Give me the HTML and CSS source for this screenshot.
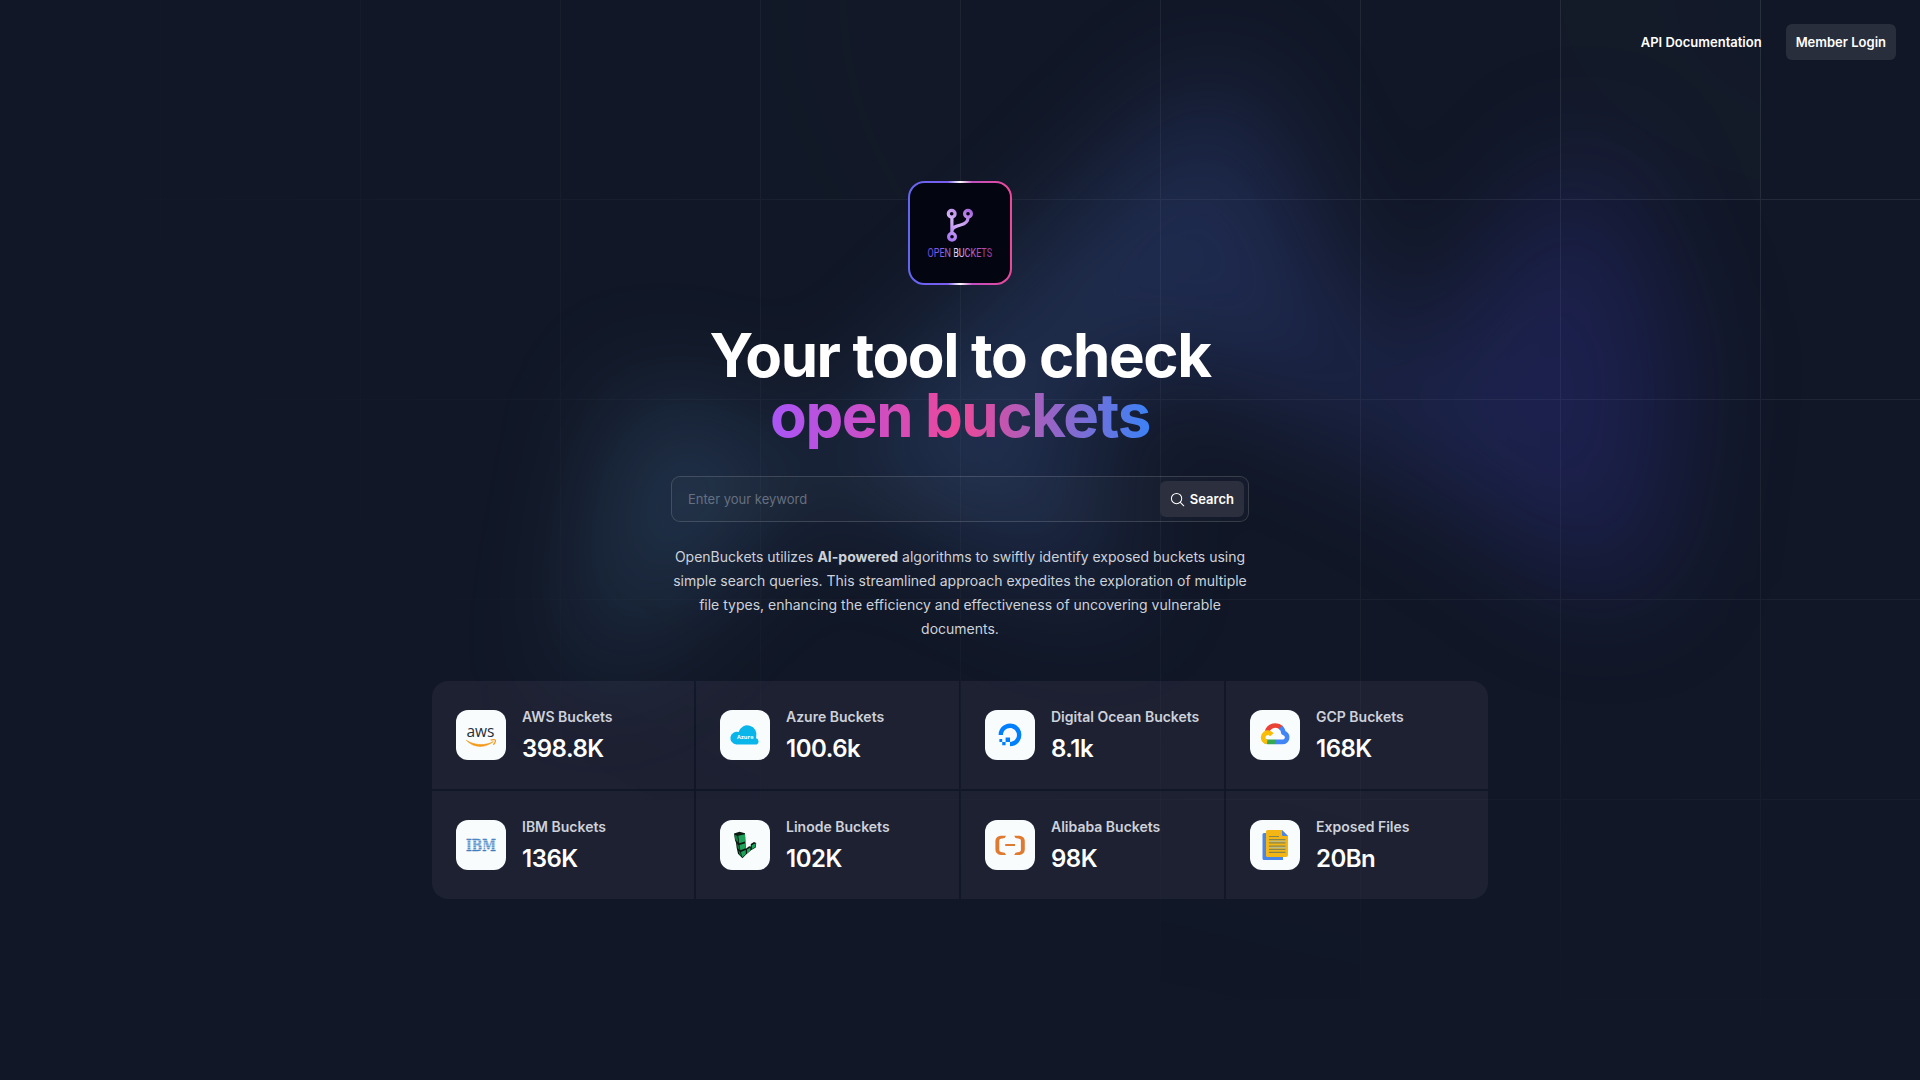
FILE: index.html
```html
<!DOCTYPE html>
<html lang="en">
<head>
<meta charset="utf-8">
<title>OpenBuckets</title>
<link rel="stylesheet" href="styles.css">
</head>
<body>
<div class="page">
  <svg class="grid-lines" aria-hidden="true">
    <defs>
      <pattern id="grid" width="200" height="200" x="50%" y="-1" patternUnits="userSpaceOnUse">
        <path d="M.5 200V.5H200" fill="none"/>
      </pattern>
    </defs>
    <svg x="50%" y="-1" class="grid-squares">
      <path d="M-200 0h201v201h-201Z M600 0h201v201h-201Z M-400 600h201v201h-201Z M200 800h201v201h-201Z" stroke-width="0"/>
    </svg>
    <rect width="100%" height="100%" stroke-width="0" fill="url(#grid)"/>
  </svg>
  <div class="glow" aria-hidden="true"><div class="glow-shape"></div></div>

  <header class="topbar">
    <a class="nav-link">API Documentation</a>
    <a class="nav-button">Member Login</a>
  </header>

  <main class="hero">
    <svg class="logo" viewBox="0 0 104 104">
      <defs>
        <linearGradient id="edge" x1="0" x2="1" y1="0" y2="0">
          <stop offset="0" stop-color="#6366f1"/><stop offset=".38" stop-color="#7c5cf0"/><stop offset=".5" stop-color="#fff"/><stop offset=".62" stop-color="#c050c0"/><stop offset="1" stop-color="#ec4899"/>
        </linearGradient>
        <linearGradient id="branch" gradientUnits="userSpaceOnUse" x1="39" x2="65" y1="60" y2="30">
          <stop offset="0" stop-color="#a26bf5"/><stop offset=".5" stop-color="#d3b2f6"/><stop offset="1" stop-color="#a561dc"/>
        </linearGradient>
        <linearGradient id="word" gradientUnits="userSpaceOnUse" x1="19" x2="85" y1="0" y2="0">
          <stop offset="0" stop-color="#6a4fe0"/><stop offset=".34" stop-color="#8f6cf0"/><stop offset=".46" stop-color="#f4efff"/><stop offset=".62" stop-color="#c06ad8"/><stop offset="1" stop-color="#a2379a"/>
        </linearGradient>
      </defs>
      <rect x="1" y="1" width="102" height="102" rx="15.500" fill="#030511" stroke="url(#edge)" stroke-width="2"/>
      <g fill="none" stroke="url(#branch)" stroke-width="3.200">
        <circle cx="43.700" cy="32.700" r="3.400"/><circle cx="60" cy="32.700" r="3.400"/><circle cx="44" cy="55.700" r="3.400"/>
        <path d="M43.900 36.500V52M60 36.500c0 5-3.500 6.500-7.500 7.500-4.500 1.200-8.500 2-8.500 6"/>
      </g>
      <text class="logo-word" x="19.500" y="76.300" textLength="64.500" lengthAdjust="spacingAndGlyphs">OPEN BUCKETS</text>
    </svg>

    <h1 class="headline">Your tool to check<br><span class="headline-accent">open buckets</span></h1>

    <div class="search">
      <span class="search-placeholder">Enter your keyword</span>
      <a class="search-button">
        <svg class="search-icon" viewBox="0 0 16 16"><circle cx="7" cy="7" r="5.500"/><path d="M11 11l3.700 3.700"/></svg>
        Search
      </a>
    </div>

    <p class="intro">OpenBuckets utilizes <strong>AI-powered</strong> algorithms to swiftly identify exposed buckets using simple search queries. This streamlined approach expedites the exploration of multiple file types, enhancing the efficiency and effectiveness of uncovering vulnerable documents.</p>

    <dl class="stats">
      <div class="stat">
        <svg class="stat-icon" viewBox="0 0 50 50">
          <text class="aws-word" x="10.500" y="27.300" textLength="28" lengthAdjust="spacingAndGlyphs">aws</text>
          <path d="M10.300 30.300c8.500 5.400 19.200 5.600 27 1.300-7.500 6.300-19 7-27-1.300Z" fill="#f59a1b" stroke="#f59a1b" stroke-width=".6"/>
          <path d="M34.600 30.100c2-.8 4.400-.7 4.700-.1.300.8-.4 3.200-2 4.700" fill="none" stroke="#f59a1b" stroke-width="1.200"/>
        </svg>
        <div><dt>AWS Buckets</dt><dd>398.8K</dd></div>
      </div>
      <div class="stat">
        <svg class="stat-icon" viewBox="0 0 50 50">
          <path d="M16.500 34.500A6.400 6.400 0 1 1 18.700 22a9 9 0 0 1 17.500 4.800c0 .5-.1.900-.1 1.400a3.400 3.400 0 0 1 .6 6.300Z" fill="#0ab5ea"/>
          <text class="azure-word" x="17" y="29.300" textLength="16.500">Azure</text>
        </svg>
        <div><dt>Azure Buckets</dt><dd>100.6k</dd></div>
      </div>
      <div class="stat">
        <svg class="stat-icon" viewBox="0 0 50 50">
          <g fill="#0080ff">
            <path d="M25 36.300v-4.400c4.700 0 8.300-4.600 6.500-9.500a6.600 6.600 0 0 0-4-4c-4.900-1.800-9.500 1.800-9.500 6.500h-4.400c0-7.400 7.200-13.200 15-10.800 3.400 1.100 6.100 3.800 7.200 7.200C38.200 29.100 32.400 36.300 25 36.300Z"/>
            <path d="M20.600 27.500H25v4.400h-4.400ZM17.200 31.900h3.400v3.400h-3.400ZM14.400 29.100h2.800v2.800h-2.800Z"/>
          </g>
        </svg>
        <div><dt>Digital Ocean Buckets</dt><dd>8.1k</dd></div>
      </div>
      <div class="stat">
        <svg class="stat-icon" viewBox="0 0 50 50">
          <g fill="none" stroke-width="4.600" stroke-linejoin="round">
            <path d="M17 21.500a8.800 8.800 0 0 1 14.500-3.500" stroke="#ea4335"/>
            <path d="M30.600 17.200c2 1.700 2.700 3.500 2.800 5.600 3.100.9 4.200 3.200 3.700 5.400-.5 2.400-2.400 3.700-4.600 3.700h-7.500" stroke="#4285f4"/>
            <path d="M25.300 31.900h-7.500a5 5 0 0 1-3-1" stroke="#34a853"/>
            <path d="M17.200 31.900c-2.700-.4-4.300-2.500-4-4.900.3-2.900 2.900-4.800 5.600-4.200 1.300.3 2.200 1 3 2" stroke="#fbbc05"/>
          </g>
        </svg>
        <div><dt>GCP Buckets</dt><dd>168K</dd></div>
      </div>
      <div class="stat">
        <svg class="stat-icon" viewBox="0 0 50 50">
          <text class="ibm-word" x="10" y="31" textLength="30" lengthAdjust="spacingAndGlyphs">IBM</text>
          <path d="M9 20.400h32M9 22.200h32M9 24h32M9 25.800h32M9 27.600h32M9 29.400h32" stroke="#f9fcfd" stroke-width=".6"/>
        </svg>
        <div><dt>IBM Buckets</dt><dd>136K</dd></div>
      </div>
      <div class="stat">
        <svg class="stat-icon" viewBox="0 0 50 50">
          <path d="M14 13.500l5.500-1.800 5.500 1.500.5 9 .3 6.500 3.400-2.500 1.600.3V24l3.200-2 2.200 1-.4 4.500-4.800 2.800-4.600 3.900-4 4.100-4.400-4.500-1.300-5.800-.7-5.200-1-2.500Z" fill="#0a1a10"/>
          <path d="M18.300 15.800l6.700-1.500.2 7.200-6 1.700ZM19.400 25l6-1.700.2 4.900-5.200 2ZM21 32l4.800-2v4.300l-3.700 3ZM27 29.600l3.300-2v3l-3.200 2.800ZM31.700 25.300l4-2-.3 3.700-3.500 2Z" fill="#1fa35a"/>
          <path d="M14.300 14.600l3.200 1.500.9 6.700-3-3ZM17 24l1.600 1.300 1.100 4.700-2-1.700ZM18.500 30.500l1.700 1.800 1.200 4-2-2Z" fill="#137a40"/>
        </svg>
        <div><dt>Linode Buckets</dt><dd>102K</dd></div>
      </div>
      <div class="stat">
        <svg class="stat-icon" viewBox="0 0 50 50">
          <g fill="#e07a31">
            <path d="M21 15.700h-5.300a5.300 5.300 0 0 0-5.300 5.300v8.600a5.300 5.300 0 0 0 5.300 5.300H21l-1.300-2.200-3.700-.8a2 2 0 0 1-1.700-2v-9.200a2 2 0 0 1 1.700-2l3.700-.8ZM29.200 15.700h5.300a5.300 5.300 0 0 1 5.300 5.300v8.600a5.300 5.300 0 0 1-5.300 5.300h-5.300l1.300-2.200 3.700-.8a2 2 0 0 0 1.700-2v-9.200a2 2 0 0 0-1.700-2l-3.700-.8Z"/>
            <path d="M20.200 24h9.800v2h-9.800Z"/>
          </g>
        </svg>
        <div><dt>Alibaba Buckets</dt><dd>98K</dd></div>
      </div>
      <div class="stat">
        <svg class="stat-icon" viewBox="0 0 50 50">
          <path d="M12.500 14.500a1.500 1.500 0 0 1 1.500-1.500h19v27H14a1.500 1.500 0 0 1-1.500-1.500Z" fill="#4a86e8"/>
          <path d="M17.500 10H32l6 6v19a2 2 0 0 1-2 2H17.500a1.500 1.500 0 0 1-1.500-1.500v-24a1.500 1.500 0 0 1 1.500-1.500Z" fill="#f4b614"/>
          <path d="M32 10l6 6h-5a1 1 0 0 1-1-1Z" fill="#4a86e8"/>
          <path d="M19 16.500h10M19 19.700h16.500M19 22.900h16.500M19 26.100h16.500M19 29.300h16.500M19 32.300h16.500" stroke="#85854f" stroke-width="1.200"/>
          <path d="M19 21.300h16.500M19 27.700h16.500" stroke="#b9bd8c" stroke-width="1.200"/>
        </svg>
        <div><dt>Exposed Files</dt><dd>20Bn</dd></div>
      </div>
    </dl>
  </main>
</div>
</body>
</html>
```
FILE: styles.css
```css
* { box-sizing: border-box; margin: 0; }
body { background: #111827; color: #fff; font-family: Inter, "Liberation Sans", sans-serif; }
.page { position: relative; isolation: isolate; overflow: hidden; height: 1080px; background: #111726; }

/* Backdrop */
.grid-lines { position: absolute; inset: 0; z-index: -2; width: 100%; height: 100%; stroke: rgba(255, 255, 255, .1); mask-image: radial-gradient(100% 100% at top right, #fff, transparent); }
.grid-squares { overflow: visible; fill: rgba(31, 41, 55, .2); }
.glow { position: absolute; z-index: -1; left: calc(50% - 384px); top: 60px; filter: blur(60px); }
.glow-shape { width: 1108px; height: 632px; opacity: .2; background: linear-gradient(to right, #74c6ff, #5a86f8 50%, #443aec); clip-path: polygon(73.6% 51.7%, 91.7% 11.8%, 100% 46.4%, 97.4% 82.2%, 92.5% 84.9%, 75.7% 64%, 55.3% 47.5%, 46.5% 49.4%, 45% 62.9%, 50.3% 87.2%, 21.3% 64.1%, .1% 100%, 5.4% 51.1%, 21.4% 63.9%, 58.9% .2%, 73.6% 51.7%); }

.topbar { display: flex; justify-content: flex-end; align-items: center; gap: 24px; height: 84px; padding: 0 24px; font-size: 13px; line-height: 20px; font-weight: 600; }
.nav-button { padding: 8px 10px; border-radius: 6px; background: rgba(255, 255, 255, .1); }

.hero { display: flex; flex-direction: column; align-items: center; padding-top: 97px; }
.logo { width: 104px; height: 104px; }
.logo-word { font: 400 13.500px Roboto, sans-serif; fill: url(#word); }
.headline { margin-top: 40px; text-align: center; font-size: 60px; line-height: 60px; font-weight: 700; letter-spacing: -1.4px; }
.headline-accent { display: inline-block; padding-bottom: 4px; background: linear-gradient(to right, #a855f7, #ec4899, #3b82f6); -webkit-background-clip: text; background-clip: text; color: transparent; }

.search { display: flex; align-items: center; justify-content: space-between; width: 578px; height: 46px; margin-top: 27px; padding: 0 4px 0 16px; border: 1px solid rgba(255, 255, 255, .15); border-radius: 9px; background: rgba(255, 255, 255, .02); font-size: 13px; }
.search-placeholder { color: #667080; }
.search-button { display: flex; align-items: center; gap: 5px; height: 36px; padding: 0 10px; border-radius: 6px; background: #2c2f3e; font-weight: 600; }
.search-icon { width: 15px; height: 15px; fill: none; stroke: #fff; stroke-width: 1.1; stroke-linecap: round; }

.intro { width: 576px; margin-top: 23px; text-align: center; font-size: 14px; line-height: 24px; color: #cdd2da; }
.intro strong { font-weight: 700; }

.stats { display: grid; grid-template-columns: 262px 263px 263px 262px; gap: 2px; width: 1056px; margin-top: 40px; border-radius: 16px; overflow: hidden; }
.stat { display: flex; align-items: center; gap: 16px; height: 108px; padding: 0 24px; background: rgba(245, 205, 255, .06); }
.stat-icon { width: 50px; height: 50px; flex: none; border-radius: 12px; background: #f9fcfd; }
.stat dt { font-size: 14px; line-height: 24px; font-weight: 560; color: #cdd1da; white-space: nowrap; }
.stat dd { margin-top: 4px; font-size: 24px; line-height: 32px; font-weight: 600; letter-spacing: -.5px; }
.aws-word { font: 400 17px "Open Sans", sans-serif; fill: #252f3e; }
.azure-word { font: 700 5.600px "Open Sans", sans-serif; fill: #fff; }
.ibm-word { font: 700 16.500px "DejaVu Serif", serif; fill: #3f7fc0; stroke: #3f7fc0; stroke-width: .4px; }
```
